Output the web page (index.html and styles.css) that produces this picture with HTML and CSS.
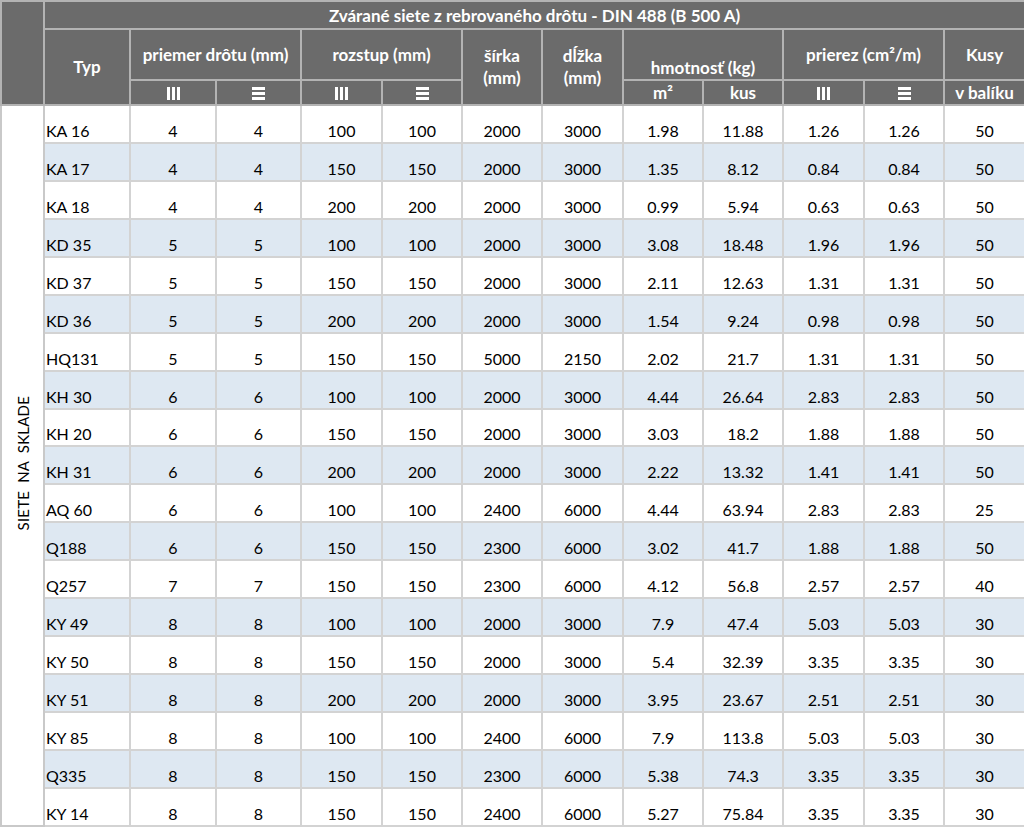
FILE: index.html
```html
<!DOCTYPE html>
<html lang="sk">
<head>
<meta charset="utf-8">
<title>Zvárané siete</title>
<link rel="stylesheet" href="styles.css">
</head>
<body>
<table class="grid">
  <colgroup>
    <col class="c-side"><col class="c-typ">
    <col class="c-86"><col class="c-85">
    <col class="c-81"><col class="c-80">
    <col class="c-80"><col class="c-81">
    <col class="c-80"><col class="c-80">
    <col class="c-81"><col class="c-80"><col class="c-81">
  </colgroup>
  <thead>
    <tr class="h-title">
      <th class="corner" rowspan="3"></th>
      <th colspan="12">Zvárané siete z rebrovaného drôtu - DIN 488 (B 500 A)</th>
    </tr>
    <tr class="h-main">
      <th rowspan="2" class="h-typ">Typ</th>
      <th colspan="2">priemer drôtu (mm)</th>
      <th colspan="2">rozstup (mm)</th>
      <th rowspan="2" class="h-two">šírka<br>(mm)</th>
      <th rowspan="2" class="h-two">dĺžka<br>(mm)</th>
      <th colspan="2" class="h-bottom">hmotnosť (kg)</th>
      <th colspan="2" class="h-split">prierez (cm²/m)</th>
      <th>Kusy</th>
    </tr>
    <tr class="h-sub">
      <th><svg class="ic" width="13" height="13" viewBox="0 0 13 13"><rect x="0" y="0" width="3" height="13"/><rect x="5" y="0" width="3" height="13"/><rect x="10" y="0" width="3" height="13"/></svg></th>
      <th><svg class="ic" width="13" height="13" viewBox="0 0 13 13"><rect x="0" y="0" width="13" height="3"/><rect x="0" y="5" width="13" height="3"/><rect x="0" y="10" width="13" height="3"/></svg></th>
      <th><svg class="ic" width="13" height="13" viewBox="0 0 13 13"><rect x="0" y="0" width="3" height="13"/><rect x="5" y="0" width="3" height="13"/><rect x="10" y="0" width="3" height="13"/></svg></th>
      <th><svg class="ic" width="13" height="13" viewBox="0 0 13 13"><rect x="0" y="0" width="13" height="3"/><rect x="0" y="5" width="13" height="3"/><rect x="0" y="10" width="13" height="3"/></svg></th>
      <th>m²</th>
      <th>kus</th>
      <th class="h-split"><svg class="ic" width="13" height="13" viewBox="0 0 13 13"><rect x="0" y="0" width="3" height="13"/><rect x="5" y="0" width="3" height="13"/><rect x="10" y="0" width="3" height="13"/></svg></th>
      <th><svg class="ic" width="13" height="13" viewBox="0 0 13 13"><rect x="0" y="0" width="13" height="3"/><rect x="0" y="5" width="13" height="3"/><rect x="0" y="10" width="13" height="3"/></svg></th>
      <th>v balíku</th>
    </tr>
  </thead>
  <tbody>
    <tr><td class="side" rowspan="19"><span class="side-label">SIETE&nbsp;&nbsp;NA&nbsp;&nbsp;SKLADE</span></td><td class="typ">KA 16</td><td>4</td><td>4</td><td>100</td><td>100</td><td>2000</td><td>3000</td><td>1.98</td><td>11.88</td><td class="split">1.26</td><td>1.26</td><td>50</td></tr>
    <tr><td class="typ">KA 17</td><td>4</td><td>4</td><td>150</td><td>150</td><td>2000</td><td>3000</td><td>1.35</td><td>8.12</td><td class="split">0.84</td><td>0.84</td><td>50</td></tr>
    <tr><td class="typ">KA 18</td><td>4</td><td>4</td><td>200</td><td>200</td><td>2000</td><td>3000</td><td>0.99</td><td>5.94</td><td class="split">0.63</td><td>0.63</td><td>50</td></tr>
    <tr><td class="typ">KD 35</td><td>5</td><td>5</td><td>100</td><td>100</td><td>2000</td><td>3000</td><td>3.08</td><td>18.48</td><td class="split">1.96</td><td>1.96</td><td>50</td></tr>
    <tr><td class="typ">KD 37</td><td>5</td><td>5</td><td>150</td><td>150</td><td>2000</td><td>3000</td><td>2.11</td><td>12.63</td><td class="split">1.31</td><td>1.31</td><td>50</td></tr>
    <tr><td class="typ">KD 36</td><td>5</td><td>5</td><td>200</td><td>200</td><td>2000</td><td>3000</td><td>1.54</td><td>9.24</td><td class="split">0.98</td><td>0.98</td><td>50</td></tr>
    <tr><td class="typ">HQ131</td><td>5</td><td>5</td><td>150</td><td>150</td><td>5000</td><td>2150</td><td>2.02</td><td>21.7</td><td class="split">1.31</td><td>1.31</td><td>50</td></tr>
    <tr><td class="typ">KH 30</td><td>6</td><td>6</td><td>100</td><td>100</td><td>2000</td><td>3000</td><td>4.44</td><td>26.64</td><td class="split">2.83</td><td>2.83</td><td>50</td></tr>
    <tr><td class="typ">KH 20</td><td>6</td><td>6</td><td>150</td><td>150</td><td>2000</td><td>3000</td><td>3.03</td><td>18.2</td><td class="split">1.88</td><td>1.88</td><td>50</td></tr>
    <tr><td class="typ">KH 31</td><td>6</td><td>6</td><td>200</td><td>200</td><td>2000</td><td>3000</td><td>2.22</td><td>13.32</td><td class="split">1.41</td><td>1.41</td><td>50</td></tr>
    <tr><td class="typ">AQ 60</td><td>6</td><td>6</td><td>100</td><td>100</td><td>2400</td><td>6000</td><td>4.44</td><td>63.94</td><td class="split">2.83</td><td>2.83</td><td>25</td></tr>
    <tr><td class="typ">Q188</td><td>6</td><td>6</td><td>150</td><td>150</td><td>2300</td><td>6000</td><td>3.02</td><td>41.7</td><td class="split">1.88</td><td>1.88</td><td>50</td></tr>
    <tr><td class="typ">Q257</td><td>7</td><td>7</td><td>150</td><td>150</td><td>2300</td><td>6000</td><td>4.12</td><td>56.8</td><td class="split">2.57</td><td>2.57</td><td>40</td></tr>
    <tr><td class="typ">KY 49</td><td>8</td><td>8</td><td>100</td><td>100</td><td>2000</td><td>3000</td><td>7.9</td><td>47.4</td><td class="split">5.03</td><td>5.03</td><td>30</td></tr>
    <tr><td class="typ">KY 50</td><td>8</td><td>8</td><td>150</td><td>150</td><td>2000</td><td>3000</td><td>5.4</td><td>32.39</td><td class="split">3.35</td><td>3.35</td><td>30</td></tr>
    <tr><td class="typ">KY 51</td><td>8</td><td>8</td><td>200</td><td>200</td><td>2000</td><td>3000</td><td>3.95</td><td>23.67</td><td class="split">2.51</td><td>2.51</td><td>30</td></tr>
    <tr><td class="typ">KY 85</td><td>8</td><td>8</td><td>100</td><td>100</td><td>2400</td><td>6000</td><td>7.9</td><td>113.8</td><td class="split">5.03</td><td>5.03</td><td>30</td></tr>
    <tr><td class="typ">Q335</td><td>8</td><td>8</td><td>150</td><td>150</td><td>2300</td><td>6000</td><td>5.38</td><td>74.3</td><td class="split">3.35</td><td>3.35</td><td>30</td></tr>
    <tr><td class="typ">KY 14</td><td>8</td><td>8</td><td>150</td><td>150</td><td>2400</td><td>6000</td><td>5.27</td><td>75.84</td><td class="split">3.35</td><td>3.35</td><td>30</td></tr>
  </tbody>
</table>
</body>
</html>
```

FILE: styles.css
```css
html, body {
  margin: 0;
  padding: 0;
  background: #ffffff;
}

body {
  font-family: Lato, "Open Sans", "Liberation Sans", sans-serif;
  color: #000;
}

.grid {
  width: 1024px;
  table-layout: fixed;
  border-collapse: collapse;
  font-size: 16px;
}

.c-side { width: 43px; }
.c-typ { width: 86px; }
.c-86 { width: 86px; }
.c-85 { width: 85px; }
.c-81 { width: 81px; }
.c-80 { width: 80px; }

/* header */
.grid th {
  background: #6b6b6b;
  color: #fff;
  font-weight: 700;
  font-size: 17px;
  border: 2px solid #b3b3b3;
  padding: 0;
  line-height: 22px;
  text-align: center;
  vertical-align: middle;
  white-space: nowrap;
}

.h-title { height: 28px; }
.h-title th { line-height: 20px; padding-top: 2px; }
.h-main { height: 51px; }
.h-sub { height: 25px; }
.h-sub th { padding-top: 1px; }

.h-typ { padding-top: 2px; }
.h-two { line-height: 24px; padding-top: 9px; }
.grid th.h-bottom { vertical-align: bottom; padding-bottom: 0; }

.ic {
  display: inline-block;
  vertical-align: -1px;
  fill: #fff;
}

/* body */
.grid td {
  border: 2px solid #d3d3d3;
  height: 34.95px;
  padding: 0 2px 1px;
  text-align: center;
  vertical-align: bottom;
  line-height: 20px;
  white-space: nowrap;
}

.grid tbody tr:nth-child(even) td {
  background: #dee8f2;
}

.grid td.typ {
  text-align: left;
  padding-left: 1px;
}

.grid td.split {
  border-left-color: #8a8a8a;
}

.grid td.side {
  background: #fff !important;
  border-color: #c9c9c9;
  vertical-align: middle;
  text-align: center;
  padding: 0;
}

.side-label {
  display: inline-block;
  writing-mode: vertical-rl;
  transform: rotate(180deg);
  font-size: 15px;
  line-height: 18px;
  letter-spacing: 0.2px;
  margin-left: 1px;
}
```
